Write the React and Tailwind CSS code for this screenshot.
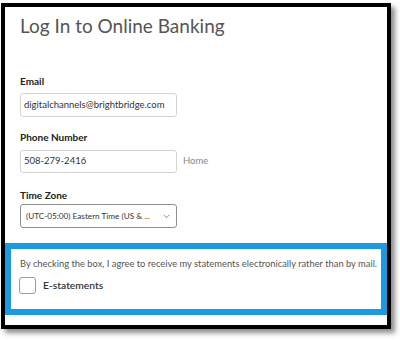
export default function App() {
  const font = { fontFamily: 'Lato, "Open Sans", sans-serif' };
  return (
    <div className="w-[400px] h-[340px] bg-white overflow-hidden" style={font}>
      <div className="ml-[1px] mt-[3px] w-[390px] h-[326px] border-4 border-black bg-white shadow-[4px_4px_5px_rgba(0,0,0,0.45)] flex flex-col">
        <div className="pl-[15px] flex flex-col">
          <h1 className="mt-[5px] text-[19px] leading-[28px] text-[#555] font-normal">Log In to Online Banking</h1>

          <label className="mt-[34px] text-[10px] leading-[14px] font-bold text-[#222]">Email</label>
          <div className="mt-[5px] w-[157px] h-[24px] border border-[#d4d4d4] rounded-[3px] flex items-center pl-[3px] text-[9.5px] text-[#333] whitespace-nowrap">
            digitalchannels@brightbridge.com
          </div>

          <label className="mt-[13px] text-[10px] leading-[14px] font-bold text-[#222]">Phone Number</label>
          <div className="mt-[6px] flex items-center">
            <div className="w-[157px] h-[23px] border border-[#d4d4d4] rounded-[3px] flex items-center pl-[3px] text-[9.5px] text-[#333]">
              508-279-2416
            </div>
            <span className="ml-[6px] text-[9.5px] text-[#888]">Home</span>
          </div>

          <label className="mt-[15px] text-[10px] leading-[14px] font-bold text-[#222]">Time Zone</label>
          <div className="mt-[2px] w-[157px] h-[24px] border border-[#8f8f8f] rounded-[3px] flex items-center pl-[5px] pr-[6px] text-[8.2px] text-[#333]">
            <span className="flex-1 whitespace-nowrap">(UTC-05:00) Eastern Time (US &amp; ...</span>
            <svg width="7" height="5" viewBox="0 0 7 5" className="ml-1">
              <path d="M0.8 1 L3.5 3.7 L6.2 1" fill="none" stroke="#777" strokeWidth="0.9" />
            </svg>
          </div>
        </div>

        <div className="mt-[15px] h-[72px] border-[6px] border-[#1b9ae0] pl-[9px] pt-[8px] flex flex-col">
          <p className="text-[9.35px] leading-[14px] text-[#555] whitespace-nowrap">
            By checking the box, I agree to receive my statements electronically rather than by mail.
          </p>
          <div className="mt-[6px] flex items-center">
            <div className="ml-[-1px] w-[17px] h-[17px] border border-[#9a9a9a] rounded-[3px] bg-white" />
            <span className="ml-[7px] text-[10.3px] font-semibold text-[#333]">E-statements</span>
          </div>
        </div>
      </div>
    </div>
  );
}
